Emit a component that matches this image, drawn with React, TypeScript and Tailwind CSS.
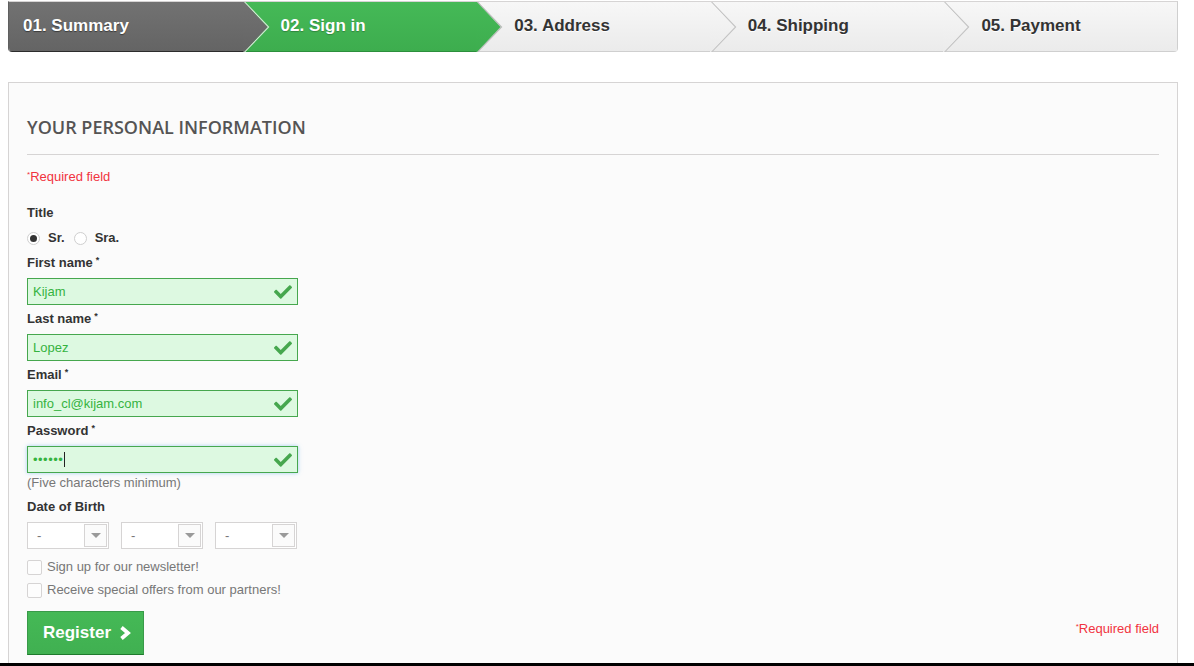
import { FaCheck } from "react-icons/fa"

type StepState = "done" | "current" | "todo"

const steps: { label: string; state: StepState }[] = [
  { label: "01. Summary", state: "done" },
  { label: "02. Sign in", state: "current" },
  { label: "03. Address", state: "todo" },
  { label: "04. Shipping", state: "todo" },
  { label: "05. Payment", state: "todo" },
]

const stepStyles: Record<StepState, string> = {
  done: "bg-linear-to-b from-[#727272] to-[#646464] text-white border-b-[#2c2c2c] [text-shadow:0_1px_1px_rgba(0,0,0,0.45)]",
  current:
    "bg-linear-to-b from-[#45b957] to-[#3dad4e] text-white border-b-[#2c8f3c] [text-shadow:0_1px_1px_rgba(0,0,0,0.25)]",
  todo: "bg-linear-to-b from-[#f7f7f7] to-[#ebebeb] text-[#333] border-b-[#cfcfcf] [text-shadow:0_1px_#fff]",
}

const arrowColors: Record<StepState, { top: string; bottom: string; edge: string }> = {
  done: { top: "#727272", bottom: "#646464", edge: "#cfe9d2" },
  current: { top: "#45b957", bottom: "#3dad4e", edge: "#bdbdbd" },
  todo: { top: "#f7f7f7", bottom: "#ebebeb", edge: "#c4c4c4" },
}

const fields = [
  { label: "First name", value: "Kijam" },
  { label: "Last name", value: "Lopez" },
  { label: "Email", value: "info_cl@kijam.com" },
]

function StepBar() {
  return (
    <div className="ml-2 mr-4 mt-px grid h-[51px] grid-cols-5 overflow-hidden rounded-b-[4px] border-x border-t border-t-[#d6d4d4] border-l-[#5f5f5f] border-r-[#cfcfcf]">
      {steps.map((step, i) => {
        const c = arrowColors[step.state]
        return (
          <div
            key={step.label}
            className={`relative flex h-full min-w-0 items-center border-b pb-[2px] text-[17px] font-bold ${stepStyles[step.state]} ${
              i === 0 ? "pl-[14px]" : "pl-[38px]"
            }`}
          >
            {step.label}
            {i < steps.length - 1 && (
              <svg className="absolute left-full top-0 z-10 h-[50px] w-[27px]" viewBox="0 0 27 50">
                <defs>
                  <linearGradient id={`arrow${i}`} x1="0" y1="0" x2="0" y2="1">
                    <stop offset="0" stopColor={c.top} />
                    <stop offset="1" stopColor={c.bottom} />
                  </linearGradient>
                </defs>
                <polyline points="0.5,-1 25.5,25 0.5,51" fill="none" stroke={c.edge} strokeWidth="1.3" />
                <polygon points="0,-1 24.5,25 0,51" fill={`url(#arrow${i})`} />
              </svg>
            )}
          </div>
        )
      })}
    </div>
  )
}

function Label({ text, required }: { text: string; required?: boolean }) {
  return (
    <div className="text-[13px] font-bold leading-[18px] text-[#333]">
      {text}
      {required && <sup className="ml-[3px] text-[9px] font-bold">*</sup>}
    </div>
  )
}

function ValidInput({ children, focused }: { children: React.ReactNode; focused?: boolean }) {
  return (
    <div
      className={`relative mt-[6px] flex h-[27px] w-[271px] items-center border border-[#46a74e] bg-[#ddf9e1] pl-[5px] text-[13px] text-[#35b33f] ${
        focused ? "shadow-[0_0_4px_rgba(102,175,233,0.6)]" : ""
      }`}
    >
      {children}
      <FaCheck className="absolute right-[5px] top-1/2 -translate-y-1/2 text-[#46a74e]" size={18} />
    </div>
  )
}

function Radio({ checked }: { checked?: boolean }) {
  return (
    <span className="flex h-[13px] w-[13px] items-center justify-center rounded-full border border-[#cfcfcf] bg-white">
      {checked && <span className="h-[7px] w-[7px] rounded-full bg-[#333]" />}
    </span>
  )
}

function FakeSelect() {
  return (
    <div className="flex h-[27px] w-[82px] items-center justify-between border border-[#d6d4d4] bg-white pl-[9px] pr-px text-[13px] text-[#777]">
      -
      <span className="flex h-[23px] w-[23px] items-center justify-center border border-[#d6d4d4] bg-[#fbfbfb]">
        <span className="h-0 w-0 border-x-[5px] border-t-[5px] border-x-transparent border-t-[#9a9a9a]" />
      </span>
    </div>
  )
}

function Checkbox({ text }: { text: string }) {
  return (
    <div className="flex h-[18px] items-center gap-[5px] text-[13px] text-[#777]">
      <span className="h-[15px] w-[15px] rounded-[2px] border border-[#d6d4d4] bg-[#fdfdfd]" />
      {text}
    </div>
  )
}

export default function App() {
  return (
    <div className="flex h-[666px] flex-col overflow-hidden bg-white font-['Liberation_Sans',Arial,sans-serif]">
      <div className="min-h-0 flex-1 overflow-hidden">
        <StepBar />

        <div className="ml-2 mr-4 mt-[30px] border border-[#d6d4d4] bg-[#fbfbfb] px-[18px] pb-4 pt-[33px]">
          <h3 className="border-b border-[#d6d4d4] pb-4 font-['Open_Sans',sans-serif] text-[18px] font-semibold uppercase leading-[22px] text-[#555454]">
            Your personal information
          </h3>

          <p className="mt-[13px] text-[13px] leading-[18px] text-[#f13340]">
            <sup className="text-[8px]">*</sup>Required field
          </p>

          <div className="mt-[18px]">
            <Label text="Title" />
          </div>
          <div className="mt-[7px] flex h-[18px] items-center text-[13px] font-bold text-[#333]">
            <Radio checked />
            <span className="ml-2">Sr.</span>
            <span className="ml-[9px]">
              <Radio />
            </span>
            <span className="ml-[8px]">Sra.</span>
          </div>

          {fields.map((f, i) => (
            <div key={f.label} className={i === 0 ? "mt-[7px]" : "mt-[5px]"}>
              <Label text={f.label} required />
              <ValidInput>{f.value}</ValidInput>
            </div>
          ))}

          <div className="mt-[5px]">
            <Label text="Password" required />
            <ValidInput focused>
              <span className="tracking-[0.5px]">••••••</span>
              <span className="ml-px h-[15px] w-px bg-[#222]" />
            </ValidInput>
            <p className="mt-px text-[13px] leading-[18px] text-[#777]">(Five characters minimum)</p>
          </div>

          <div className="mt-[6px]">
            <Label text="Date of Birth" />
          </div>
          <div className="mt-[6px] flex gap-[12px]">
            <FakeSelect />
            <FakeSelect />
            <FakeSelect />
          </div>

          <div className="mt-[9px] flex flex-col gap-[5px]">
            <Checkbox text="Sign up for our newsletter!" />
            <Checkbox text="Receive special offers from our partners!" />
          </div>

          <div className="mt-[12px] flex items-start justify-between">
            <button className="flex h-[44px] w-[117px] items-center gap-[8px] border border-[#399a49] border-b-[#1f7a2d] bg-linear-to-b from-[#45b956] to-[#40b051] pl-[15px] text-[17px] font-bold text-white">
              Register
              <svg width="12" height="14" viewBox="0 0 12 14">
                <polyline points="2.5,1.5 9,7 2.5,12.5" fill="none" stroke="white" strokeWidth="3.8" />
              </svg>
            </button>
            <p className="mt-[9px] text-[13px] leading-[18px] text-[#f13340]">
              <sup className="text-[8px]">*</sup>Required field
            </p>
          </div>
        </div>
      </div>
      <div className="h-[3px] bg-black" />
    </div>
  )
}
